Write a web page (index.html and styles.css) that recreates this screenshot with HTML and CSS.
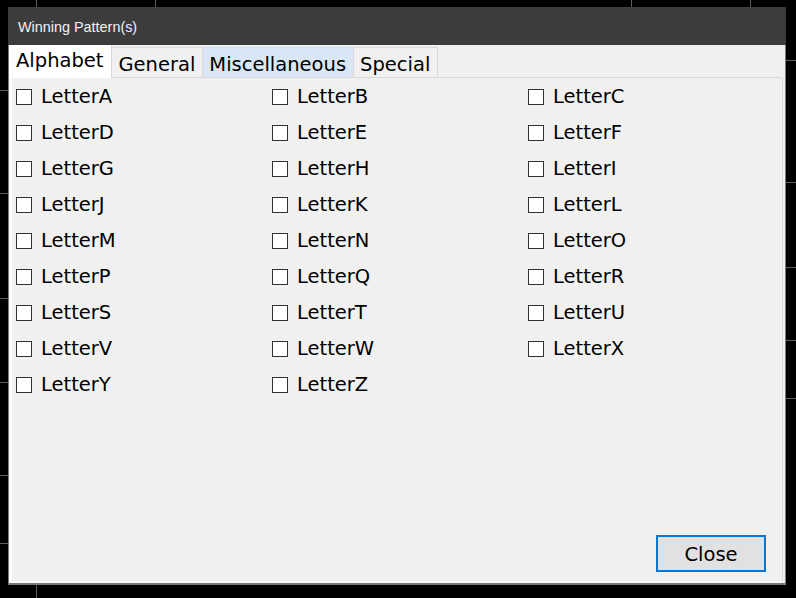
FILE: index.html
```html
<!DOCTYPE html>
<html>
<head>
<meta charset="utf-8">
<title>Winning Pattern(s)</title>
<link rel="stylesheet" href="styles.css">
</head>
<body>
<svg class="backdrop" width="796" height="598" viewBox="0 0 796 598">
  <g stroke="#5e5e5e" stroke-width="1">
    <line x1="36.5" y1="0" x2="36.5" y2="7"/>
    <line x1="155.5" y1="0" x2="155.5" y2="7"/>
    <line x1="631.5" y1="0" x2="631.5" y2="7"/>
    <line x1="750.5" y1="0" x2="750.5" y2="7"/>
    <line x1="36.5" y1="585" x2="36.5" y2="598"/>
    <line x1="0" y1="90.5" x2="8" y2="90.5"/>
    <line x1="0" y1="193.5" x2="8" y2="193.5"/>
    <line x1="0" y1="298.5" x2="8" y2="298.5"/>
    <line x1="0" y1="382.5" x2="8" y2="382.5"/>
    <line x1="0" y1="475.5" x2="8" y2="475.5"/>
    <line x1="0" y1="543.5" x2="8" y2="543.5"/>
    <line x1="786" y1="60.5" x2="796" y2="60.5"/>
    <line x1="786" y1="182.5" x2="796" y2="182.5"/>
    <line x1="786" y1="267.5" x2="796" y2="267.5"/>
    <line x1="786" y1="340.5" x2="796" y2="340.5"/>
    <line x1="786" y1="398.5" x2="796" y2="398.5"/>
  </g>
</svg>

<div class="window">
  <div class="titlebar">Winning Pattern(s)</div>
  <div class="client">
    <div class="tabs">
      <div class="tab tab-selected">Alphabet</div>
      <div class="tab">General</div>
      <div class="tab tab-hover">Miscellaneous</div>
      <div class="tab">Special</div>
    </div>
    <div class="panel">
      <div class="grid">
        <label class="item"><span class="box"></span>LetterA</label>
        <label class="item"><span class="box"></span>LetterB</label>
        <label class="item"><span class="box"></span>LetterC</label>
        <label class="item"><span class="box"></span>LetterD</label>
        <label class="item"><span class="box"></span>LetterE</label>
        <label class="item"><span class="box"></span>LetterF</label>
        <label class="item"><span class="box"></span>LetterG</label>
        <label class="item"><span class="box"></span>LetterH</label>
        <label class="item"><span class="box"></span>LetterI</label>
        <label class="item"><span class="box"></span>LetterJ</label>
        <label class="item"><span class="box"></span>LetterK</label>
        <label class="item"><span class="box"></span>LetterL</label>
        <label class="item"><span class="box"></span>LetterM</label>
        <label class="item"><span class="box"></span>LetterN</label>
        <label class="item"><span class="box"></span>LetterO</label>
        <label class="item"><span class="box"></span>LetterP</label>
        <label class="item"><span class="box"></span>LetterQ</label>
        <label class="item"><span class="box"></span>LetterR</label>
        <label class="item"><span class="box"></span>LetterS</label>
        <label class="item"><span class="box"></span>LetterT</label>
        <label class="item"><span class="box"></span>LetterU</label>
        <label class="item"><span class="box"></span>LetterV</label>
        <label class="item"><span class="box"></span>LetterW</label>
        <label class="item"><span class="box"></span>LetterX</label>
        <label class="item"><span class="box"></span>LetterY</label>
        <label class="item"><span class="box"></span>LetterZ</label>
      </div>
      <div class="footer">
        <button class="btn">Close</button>
      </div>
    </div>
  </div>
</div>
</body>
</html>
```

FILE: styles.css
```css
* {
  box-sizing: border-box;
}

html, body {
  margin: 0;
  padding: 0;
}

body {
  width: 796px;
  height: 598px;
  background: #000;
  overflow: hidden;
  position: relative;
  font-family: "DejaVu Sans", Verdana, sans-serif;
}

.backdrop {
  position: absolute;
  left: 0;
  top: 0;
}

.window {
  position: absolute;
  left: 8px;
  top: 7px;
  width: 778px;
  height: 578px;
  display: flex;
  flex-direction: column;
}

.titlebar {
  height: 38px;
  background: #3c3c3c;
  color: #f2f2f2;
  font-family: "Liberation Sans", Arial, sans-serif;
  font-size: 14.4px;
  line-height: 20px;
  padding: 10px 0 8px 10px;
}

.client {
  flex: 1;
  display: flex;
  flex-direction: column;
  background: #f0f0f0;
  border-left: 1px solid #7a7a7a;
  border-right: 1px solid #7a7a7a;
  border-bottom: 2px solid #7a7a7a;
  padding-right: 2px;
}

.tabs {
  height: 32px;
  display: flex;
  align-items: flex-end;
}

.tab {
  height: 30px;
  padding: 3px 7px 0 6px;
  font-size: 19.5px;
  line-height: 27px;
  color: #000;
  background: #f0f0f0;
  border-top: 1px solid #d9d9d9;
  border-right: 1px solid #d9d9d9;
  white-space: nowrap;
}

.tab-selected {
  height: 33px;
  margin-bottom: -1px;
  padding: 2px 8px 0 7px;
  background: #fff;
  border-top: none;
  position: relative;
  z-index: 1;
}

.tab-hover {
  background: #d8e6f5;
  border-top-color: #d0dff0;
}

.panel {
  flex: 1;
  display: flex;
  flex-direction: column;
  border-top: 1px solid #d9d9d9;
  border-right: 1px solid #d9d9d9;
  border-left: 3px solid #fbfbfb;
  border-bottom: 2px solid #fbfbfb;
  padding: 1px 0 9px 4px;
}

.grid {
  display: grid;
  grid-template-columns: repeat(3, 256px);
  grid-auto-rows: 36px;
}

.item {
  display: flex;
  align-items: center;
  gap: 9px;
  font-size: 19.5px;
  line-height: 24px;
  color: #000;
}

.box {
  width: 16px;
  height: 16px;
  background: #fff;
  border: 1px solid #333;
  flex: none;
}

.footer {
  margin-top: auto;
  display: flex;
  justify-content: flex-end;
  padding-right: 16px;
}

.btn {
  width: 110px;
  height: 37px;
  background: #e1e1e1;
  border: 2px solid #0078d7;
  font-family: "DejaVu Sans", Verdana, sans-serif;
  font-size: 19.5px;
  line-height: 24px;
  color: #000;
  padding: 2px 0 0 0;
}
```
